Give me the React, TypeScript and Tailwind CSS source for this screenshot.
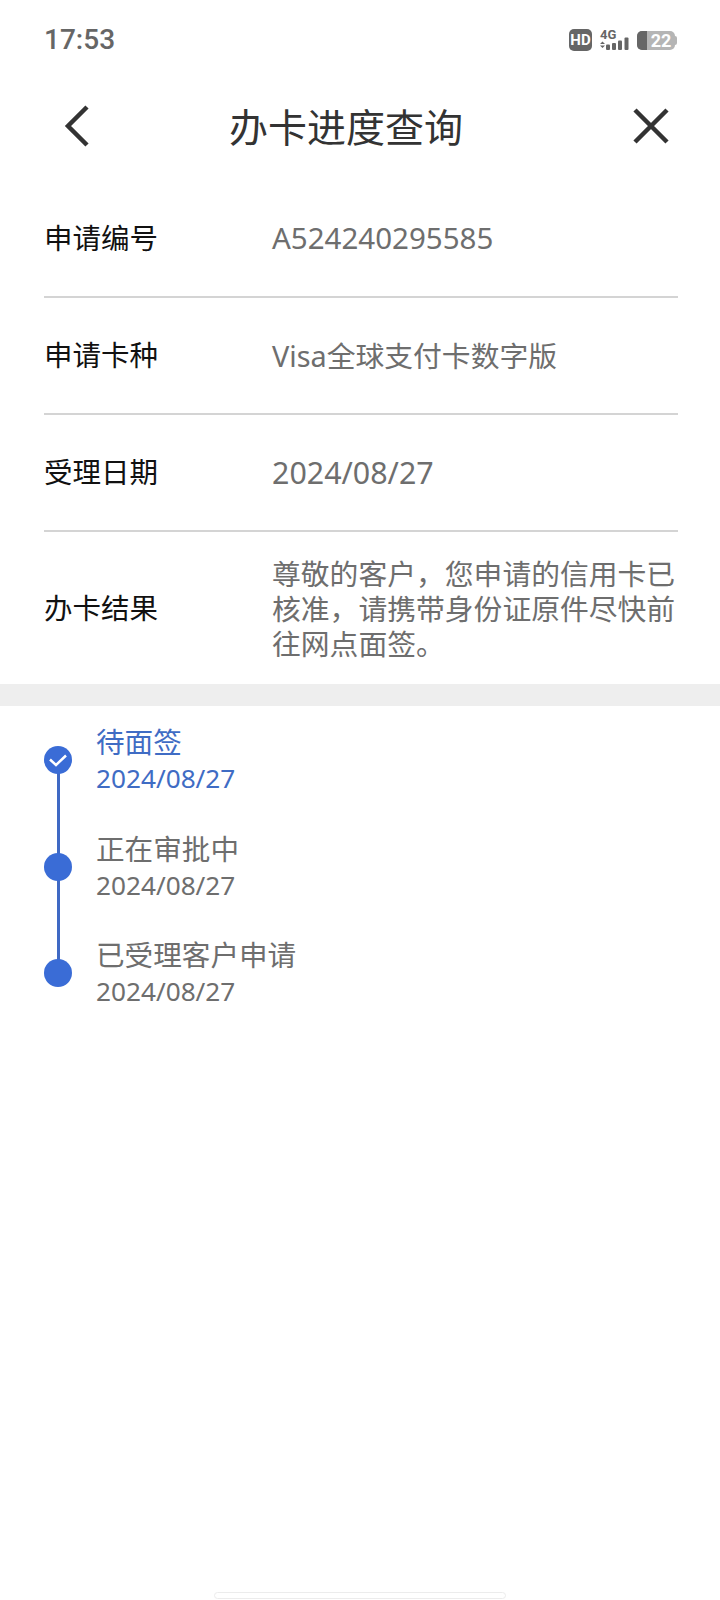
const sans = '"Noto Sans", "Noto Sans CJK SC", sans-serif'
const roboto = '"Roboto", sans-serif'

const rows = [
    { label: '申请编号', value: 'A524240295585', size: 'text-[29.5px]' },
    { label: '申请卡种', value: 'Visa全球支付卡数字版', size: 'text-[28.8px]' },
    { label: '受理日期', value: '2024/08/27', size: 'text-[30.4px]' },
]

const steps = [
    { title: '待面签', date: '2024/08/27', active: true },
    { title: '正在审批中', date: '2024/08/27', active: false },
    { title: '已受理客户申请', date: '2024/08/27', active: false },
]

function StatusBar() {
    return (
        <div className="h-[80px] pl-[44px] pr-[43px] flex items-center justify-between">
            <span className="text-[28px] font-medium text-[#666666]" style={{ fontFamily: roboto }}>17:53</span>
            <div className="flex items-center gap-[8px]">
                <div className="w-[23px] h-[22px] rounded-[5px] bg-[#666666] text-white text-[15px] font-bold leading-[22px] text-center" style={{ fontFamily: roboto }}>HD</div>
                <div className="relative w-[29px] h-[21px]">
                    <span className="absolute left-0 -top-[1px] text-[13px] font-bold leading-[12px] text-[#666666]" style={{ fontFamily: roboto }}>4G</span>
                    <svg className="absolute left-0 top-0" width="29" height="21" viewBox="0 0 29 21" fill="#666666">
                        <path d="M0 14 L2.5 11.5 L5 14 Z M0 15.5 L5 15.5 L2.5 18 Z" />
                        <rect x="6" y="14.5" width="4" height="5.5" rx="1" />
                        <rect x="12" y="13" width="4" height="7" rx="1" />
                        <rect x="18" y="10.5" width="4" height="9.5" rx="1" />
                        <rect x="24.5" y="7.5" width="4" height="12.5" rx="1" />
                    </svg>
                </div>
                <div className="flex items-center">
                    <div className="w-[38px] h-[19px] rounded-[5px] bg-[#b5b5b5] flex">
                        <div className="w-[10px] h-full rounded-l-[5px] bg-[#666666]" />
                        <span className="flex-1 text-white text-[18px] font-bold leading-[19px] text-center" style={{ fontFamily: roboto }}>22</span>
                    </div>
                    <div className="w-[2px] h-[9px] bg-[#b5b5b5] rounded-r-sm" />
                </div>
            </div>
        </div>
    )
}

function NavBar() {
    return (
        <div className="h-[92px] pl-[64px] pr-[51px] flex items-center">
            <svg width="26" height="42" viewBox="0 0 26 42" fill="none" stroke="#333333" strokeWidth="4.5">
                <path d="M23 2 L4 21 L23 40" />
            </svg>
            <h1 className="ml-[139px] text-[39px] leading-none text-[#333333]">办卡进度查询</h1>
            <svg className="ml-auto" width="36" height="36" viewBox="0 0 36 36" fill="none" stroke="#333333" strokeWidth="4.5">
                <path d="M2 2 L34 34 M34 2 L2 34" />
            </svg>
        </div>
    )
}

function App() {
    return (
        <div className="w-[720px] h-[1600px] bg-white relative overflow-hidden" style={{ fontFamily: sans }}>
            <StatusBar />
            <NavBar />
            <div className="mt-[9px] ml-[44px] mr-[42px]">
                {rows.map((row) => (
                    <div key={row.label} className="h-[117px] flex items-center border-b-2 border-[#d4d4d4]">
                        <span className="w-[228px] text-[28.5px] text-[#111111]">{row.label}</span>
                        <span className={row.size + ' text-[#6e6e6e]'}>{row.value}</span>
                    </div>
                ))}
                <div className="h-[152px] flex items-center">
                    <span className="w-[228px] shrink-0 text-[28.5px] text-[#111111]">办卡结果</span>
                    <p className="text-[28.8px] leading-[35px] text-[#6e6e6e]">尊敬的客户，您申请的信用卡已核准，请携带身份证原件尽快前往网点面签。</p>
                </div>
            </div>
            <div className="h-[22px] bg-[#eeeeee]" />
            <div className="relative mt-[1px] pl-[44px]">
                <div className="absolute left-[57px] top-[53px] w-[3px] h-[213px] bg-[#3f69c4]" />
                {steps.map((step) => (
                    <div key={step.title} className="relative h-[106.5px] flex items-center gap-[24px]">
                        <div className="w-[28px] h-[28px] rounded-full bg-[#3a6cd6] flex items-center justify-center">
                            {step.active && (
                                <svg width="20" height="15" viewBox="0 0 20 15" fill="none" stroke="white" strokeWidth="2.5">
                                    <path d="M2 6.5 L8 12 L18 2.5" />
                                </svg>
                            )}
                        </div>
                        <div className={step.active ? 'text-[#3f6cc4]' : 'text-[#6e6e6e]'}>
                            <div className="text-[28.6px] leading-[36px]">{step.title}</div>
                            <div className="text-[26.2px] leading-[36px]">{step.date}</div>
                        </div>
                    </div>
                ))}
            </div>
            <div className="absolute left-[214px] bottom-[1px] w-[292px] h-[7px] rounded-full border border-[#ececec] bg-white" />
        </div>
    )
}

export default App
